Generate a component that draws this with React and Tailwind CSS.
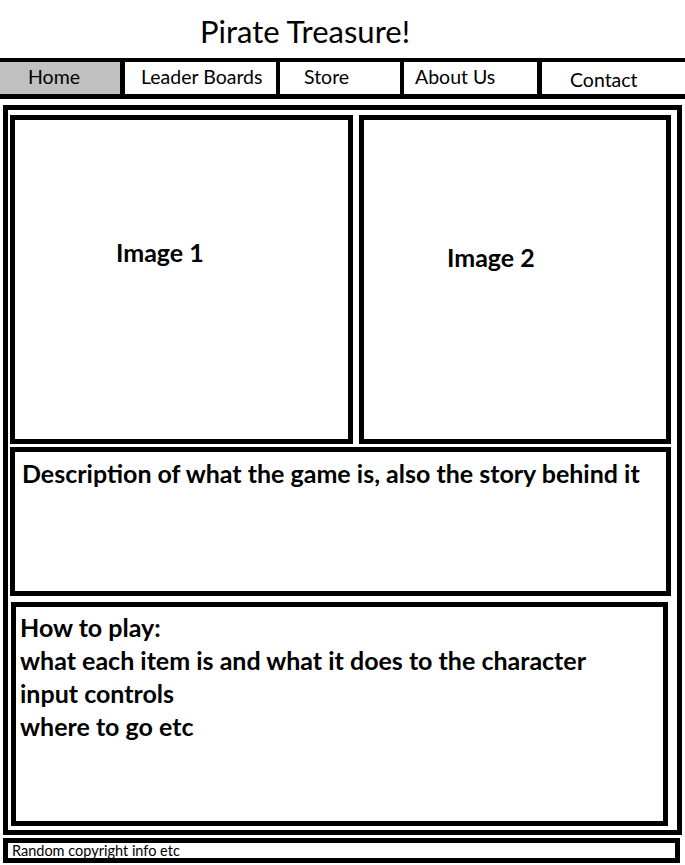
const navItems = [
  { label: 'Home', cls: 'w-[120px] pl-[28px] pt-[3px] bg-[#c0c0c0]' },
  { label: 'Leader Boards', cls: 'w-[156px] pl-[16px] pt-[3px] border-l-[5px] border-black' },
  { label: 'Store', cls: 'w-[124px] pl-[24px] pt-[3px] border-l-[4px] border-black' },
  { label: 'About Us', cls: 'w-[137px] pl-[11px] pt-[3px] border-l-[4px] border-black' },
  { label: 'Contact', cls: 'flex-1 pl-[28px] pt-[6px] border-l-[5px] border-black' },
];

const App = () => {
  return (
    <div className="w-[685px] h-[865px] bg-white text-black font-['Lato',sans-serif] overflow-hidden">
      <header className="h-[58px] pl-[200px] pt-[14px]">
        <h1 className="text-[31px] leading-[34px]">Pirate Treasure!</h1>
      </header>

      <nav className="flex h-[41px] border-t-[4px] border-b-[5px] border-black">
        {navItems.map((item) => (
          <div key={item.label} className={`${item.cls} text-[19.5px] leading-[24px]`}>
            {item.label}
          </div>
        ))}
      </nav>

      <main className="ml-[3px] mt-[6px] w-[679px] h-[730px] border-[5px] border-black pl-[2px] pt-[5px]">
        <div className="flex gap-[6px]">
          <div className="w-[343px] h-[329px] border-[5px] border-black pl-[101px] pt-[118px]">
            <p className="text-[25px] font-bold leading-[28px]">Image 1</p>
          </div>
          <div className="w-[312px] h-[329px] border-[5px] border-black pl-[83px] pt-[123px]">
            <p className="text-[25px] font-bold leading-[28px]">Image 2</p>
          </div>
        </div>

        <div className="mt-[3px] w-[661px] h-[149px] border-[5px] border-black pl-[7px] pt-[7px]">
          <p className="text-[25px] font-bold leading-[28px]">
            Description of what the game is, also the story behind it
          </p>
        </div>

        <div className="mt-[6px] ml-[1px] w-[657px] h-[224px] border-[5px] border-black pl-[4px] pt-[4px]">
          <p className="text-[25px] font-bold leading-[33px]">How to play:</p>
          <p className="text-[25px] font-bold leading-[33px]">what each item is and what it does to the character</p>
          <p className="text-[25px] font-bold leading-[33px]">input controls</p>
          <p className="text-[25px] font-bold leading-[33px]">where to go etc</p>
        </div>
      </main>

      <footer className="ml-[3px] mt-[3px] w-[677px] h-[25px] border-[5px] border-black pl-[4px]">
        <p className="text-[14.5px] leading-[15px]">Random copyright info etc</p>
      </footer>
    </div>
  );
};

export default App;
